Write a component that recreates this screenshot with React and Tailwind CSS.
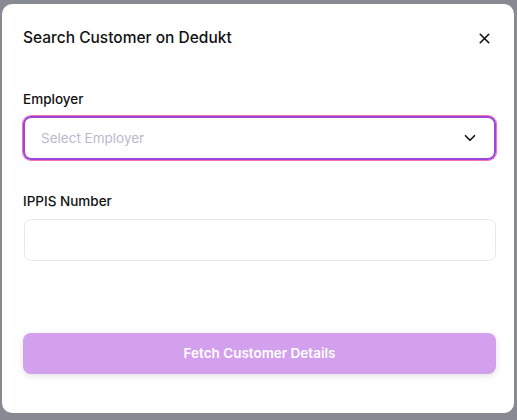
import React from 'react';
import { FiX, FiChevronDown } from 'react-icons/fi';

export default function App() {
  return (
    <div className="w-[517px] h-[420px] bg-[#878a93] pl-[2px] pt-[4px] overflow-hidden font-['Inter',sans-serif]">
      <div className="w-[512px] h-[409px] bg-white rounded-[10px] pl-[21px] pr-[18px] pt-[22px] flex flex-col">
        <div className="flex items-center justify-between">
          <h2 className="text-[15.5px] leading-6 font-medium text-[#111]">Search Customer on Dedukt</h2>
          <button className="mr-[3px] text-[#111]">
            <FiX className="w-[17px] h-[17px]" strokeWidth={2.2} />
          </button>
        </div>

        <label className="mt-[39px] text-[13.5px] leading-5 font-medium text-[#111]">Employer</label>
        <div className="mt-[7px] h-[44px] rounded-[8px] border-2 border-[#9b45d9] shadow-[0_0_0_1px_#f472b6] flex items-center justify-between pl-[16px] pr-[15px]">
          <span className="text-[13.5px] text-[#bcb8cc]">Select Employer</span>
          <FiChevronDown className="w-[18px] h-[18px] text-[#111]" strokeWidth={2.2} />
        </div>

        <label className="mt-[31px] text-[13.5px] leading-5 font-medium text-[#111]">IPPIS Number</label>
        <input
          className="mt-[8px] ml-[1px] h-[42px] rounded-[7px] border border-[#e6e8ee] px-4 text-[14px] outline-none"
          type="text"
        />

        <button className="mt-[72px] h-[41px] rounded-[8px] bg-[#d2a0ec] text-white text-[13.5px] font-semibold shadow-[0_2px_6px_rgba(0,0,0,0.12)]">
          Fetch Customer Details
        </button>
      </div>
    </div>
  );
}
